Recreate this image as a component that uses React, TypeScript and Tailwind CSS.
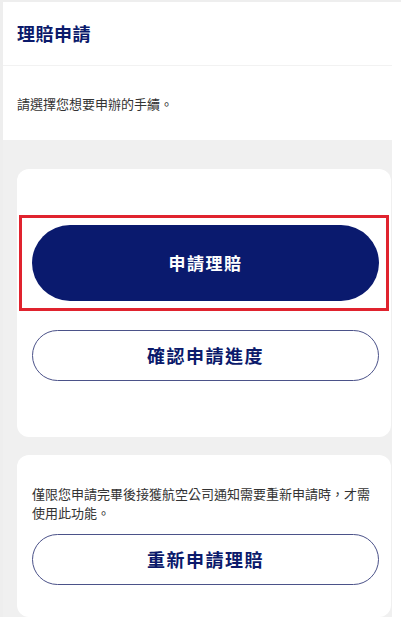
export default function App() {
  const font = { fontFamily: '"Noto Sans CJK TC", "Noto Sans", sans-serif' };

  return (
    <div className="h-[617px] w-full overflow-hidden bg-white" style={font}>
      {/* top strip */}
      <div className="h-[2px] bg-[#eeeeee]" />
      <div className="flex">
        <div className="w-[3px] shrink-0 bg-[#eeeeee]" />
        <div className="w-[389px] shrink-0 bg-[#f0f0f0]">
          {/* HEADER */}
          <div className="flex h-[64px] items-center border-b border-[#f2f2f2] bg-white pl-[14px]">
            <h1 className="text-[18px] font-bold tracking-[0.5px] text-[#0b1a6b]">理賠申請</h1>
          </div>

          {/* INTRO */}
          <div className="flex h-[74px] items-center bg-white pl-[14px] pt-[2px]">
            <p className="text-[13px] text-[#333333]">請選擇您想要申辦的手續。</p>
          </div>

          {/* CARDS */}
          <div className="flex flex-col gap-[18px] pl-[14px] pr-[1px] pt-[29px]">
            <div className="flex h-[268px] flex-col rounded-[12px] bg-white pt-[46px]">
              <div className="ml-[2px] mr-[2px] border-[3px] border-[#e0232e] pb-[7px] pl-[10px] pr-[7px] pt-[7px]">
                <button className="flex h-[76px] w-full items-center justify-center rounded-full bg-[#0a1a6e] text-[17px] font-bold tracking-[1.5px] text-white">
                  申請理賠
                </button>
              </div>
              <div className="mt-[19px] pl-[15px] pr-[12px]">
                <button className="flex h-[51px] w-full items-center justify-center rounded-full border border-[#4b5289] bg-white text-[18px] font-bold tracking-[1.5px] text-[#0b1a6b]">
                  確認申請進度
                </button>
              </div>
            </div>

            <div className="flex h-[162px] flex-col rounded-[12px] bg-white pl-[15px] pr-[12px] pt-[29px]">
              <p className="text-[13px] leading-[19px] text-[#333333]">
                僅限您申請完畢後接獲航空公司通知需要重新申請時，才需使用此功能。
              </p>
              <button className="mt-[12px] flex h-[51px] w-full items-center justify-center rounded-full border border-[#4b5289] bg-white text-[18px] font-bold tracking-[1.5px] text-[#0b1a6b]">
                重新申請理賠
              </button>
            </div>
          </div>
        </div>
      </div>
    </div>
  );
}
